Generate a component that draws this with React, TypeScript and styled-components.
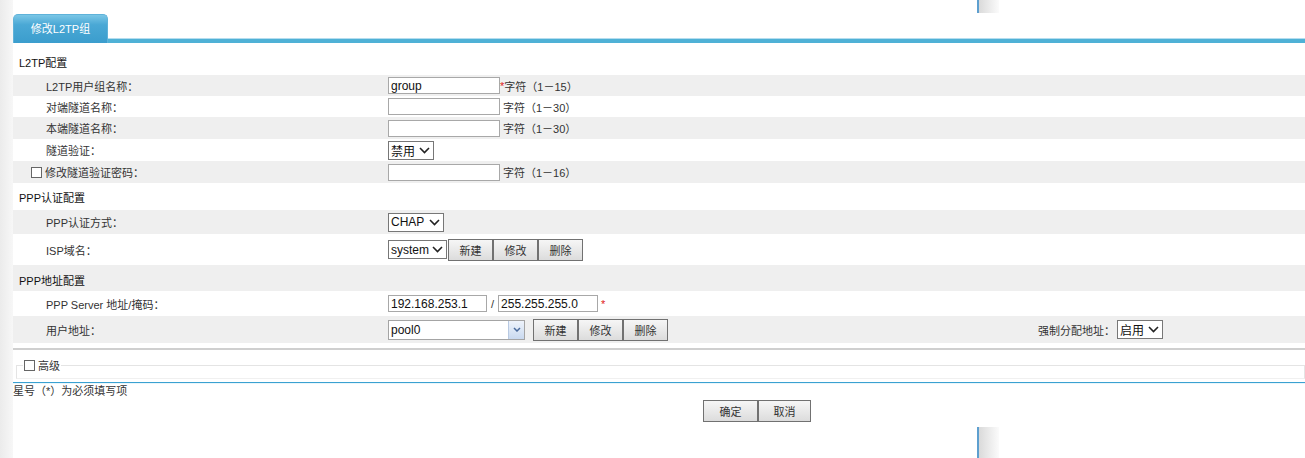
import React from 'react';
import styled, { createGlobalStyle } from 'styled-components';

const GlobalStyle = createGlobalStyle`
  html, body {
    margin: 0;
    padding: 0;
    background: #fff;
  }
  body {
    font-family: "Liberation Sans", Arial, "Noto Sans CJK SC", sans-serif;
    font-size: 11px;
    color: #333;
  }
`;

const Page = styled.div`
  position: relative;
  display: flex;
  height: 458px;
  overflow: hidden;
`;

const Gutter = styled.div`
  width: 13px;
  flex: none;
  background: linear-gradient(to right, #ebebeb, #f7f7f7);
`;

const Main = styled.div`
  flex: 1;
  min-width: 0;
  background: #fff;
`;

const TabBar = styled.div`
  display: flex;
  align-items: flex-end;
  height: 43px;
`;

const Tab = styled.div`
  width: 95px;
  height: 29px;
  box-sizing: border-box;
  border: 1px solid #5fb2d9;
  border-bottom: none;
  border-radius: 5px 5px 0 0;
  background: linear-gradient(#7ac6e6, #4aa8d5 35%, #3b9dcd);
  color: #fff;
  display: flex;
  align-items: center;
  justify-content: center;
  padding-bottom: 2px;
`;

const TabLine = styled.div`
  flex: 1;
  height: 5px;
  box-sizing: border-box;
  border-top: 1px solid #b4ddef;
  background: #4fb1d6;
`;

const Form = styled.div`
  padding-top: 6px;
`;

const Row = styled.div<{ $h: number; $alt?: boolean; $pt?: number }>`
  display: flex;
  align-items: center;
  height: ${(p) => p.$h}px;
  box-sizing: border-box;
  padding-top: ${(p) => p.$pt ?? 0}px;
  background: ${(p) => (p.$alt ? '#efefef' : '#fff')};
`;

const SectionTitle = styled.div`
  padding-left: 6px;
  color: #111;
`;

const Label = styled.div<{ $indent?: number }>`
  width: 375px;
  flex: none;
  box-sizing: border-box;
  padding-left: ${(p) => p.$indent ?? 33}px;
  display: flex;
  align-items: center;
  gap: 3px;
  color: #333;
`;

const Field = styled.div`
  flex: 1;
  display: flex;
  align-items: center;
`;

const TextInput = styled.input<{ $w?: number }>`
  width: ${(p) => p.$w ?? 112}px;
  height: 17px;
  box-sizing: border-box;
  border: 1px solid #a8a8a8;
  padding: 0 2px;
  margin: 0;
  font-family: "Liberation Sans", Arial, sans-serif;
  font-size: 12px;
  color: #111;
  outline: none;
`;

const Hint = styled.span`
  margin-left: 3px;
  color: #333;
`;

const Star = styled.span`
  color: #e02020;
`;

const Slash = styled.span`
  margin: 0 4px;
  color: #333;
`;

const SelectBox = styled.div<{ $w: number }>`
  width: ${(p) => p.$w}px;
  height: 19px;
  box-sizing: border-box;
  border: 1px solid #777;
  background: #fff;
  display: flex;
  align-items: center;
  justify-content: space-between;
  padding: 0 3px 0 2px;
  font-size: 12px;
  color: #111;
`;

const ButtonGroup = styled.div<{ $ml?: number }>`
  display: flex;
  margin-left: ${(p) => p.$ml ?? 1}px;
`;

const Btn = styled.div<{ $w?: number }>`
  width: ${(p) => p.$w ?? 45}px;
  height: 22px;
  box-sizing: border-box;
  border: 1px solid #717171;
  background: linear-gradient(#f6f6f6, #dcdcdc);
  display: flex;
  align-items: center;
  justify-content: center;
  color: #333;
  font-size: 11px;
`;

const Combo = styled.div`
  width: 137px;
  height: 20px;
  box-sizing: border-box;
  border: 1px solid #a4a4a4;
  display: flex;
  background: #fff;
`;

const ComboText = styled.div`
  flex: 1;
  display: flex;
  align-items: center;
  padding-left: 2px;
  font-size: 12px;
  color: #111;
`;

const ComboBtn = styled.div`
  width: 15px;
  border-left: 1px solid #b8c9e2;
  background: linear-gradient(#eef3fb, #c9d9ef);
  display: flex;
  align-items: center;
  justify-content: center;
`;

const RightGroup = styled.div`
  margin-left: auto;
  margin-right: 142px;
  display: flex;
  align-items: center;
  gap: 2px;
`;

const Check = styled.span`
  width: 11px;
  height: 11px;
  box-sizing: border-box;
  border: 1px solid #666;
  background: #fff;
  display: inline-block;
  flex: none;
`;

const Divider = styled.div`
  height: 2px;
  margin-top: 5px;
  background: #cfcfcf;
`;

const Advanced = styled.fieldset`
  margin: 7px 0 0 3px;
  padding: 0;
  height: 20px;
  border: 1px solid #e4e4e4;
  border-bottom-color: #f0f0f0;
`;

const Legend = styled.legend`
  margin-left: 6px;
  padding: 0 1px;
  display: flex;
  align-items: center;
  gap: 3px;
  color: #333;
`;

const BlueRule = styled.div`
  height: 2px;
  margin-top: 3px;
  border-top: 1px solid #3aa1d1;
  background: #e8f6fc;
  box-sizing: border-box;
`;

const Note = styled.div`
  height: 14px;
  line-height: 14px;
  color: #333;
`;

const Actions = styled.div`
  display: flex;
  padding-left: 690px;
  margin-top: 2px;
`;

const ScrollEdge = styled.div<{ $top: number; $h: number }>`
  position: absolute;
  left: 977px;
  top: ${(p) => p.$top}px;
  width: 22px;
  height: ${(p) => p.$h}px;
  box-sizing: border-box;
  border-left: 2px solid #5d9fcf;
  background: linear-gradient(to right, #dadada, #fbfbfb);
`;

const Chevron = () => (
  <svg width="11" height="7" viewBox="0 0 11 7">
    <polyline points="1,1 5.5,5.5 10,1" fill="none" stroke="#222" strokeWidth="1.6" />
  </svg>
);

const SmallChevron = () => (
  <svg width="8" height="5" viewBox="0 0 8 5">
    <polyline points="1,1 4,4 7,1" fill="none" stroke="#4a6a9c" strokeWidth="1.5" />
  </svg>
);

const Select = ({ w, value }: { w: number; value: string }) => (
  <SelectBox $w={w}>
    <span>{value}</span>
    <Chevron />
  </SelectBox>
);

const EditButtons = ({ ml }: { ml?: number }) => (
  <ButtonGroup $ml={ml}>
    <Btn>新建</Btn>
    <Btn>修改</Btn>
    <Btn>删除</Btn>
  </ButtonGroup>
);

export default function App() {
  return (
    <>
      <GlobalStyle />
      <Page>
        <Gutter />
        <Main>
          <TabBar>
            <Tab>修改L2TP组</Tab>
            <TabLine />
          </TabBar>
          <Form>
            <Row $h={26}>
              <SectionTitle>L2TP配置</SectionTitle>
            </Row>
            <Row $h={21} $alt>
              <Label>L2TP用户组名称：</Label>
              <Field>
                <TextInput defaultValue="group" />
                <Star>*</Star>
                <span>字符（1－15）</span>
              </Field>
            </Row>
            <Row $h={21}>
              <Label>对端隧道名称：</Label>
              <Field>
                <TextInput />
                <Hint>字符（1－30）</Hint>
              </Field>
            </Row>
            <Row $h={22} $alt>
              <Label>本端隧道名称：</Label>
              <Field>
                <TextInput />
                <Hint>字符（1－30）</Hint>
              </Field>
            </Row>
            <Row $h={22}>
              <Label>隧道验证：</Label>
              <Field>
                <Select w={46} value="禁用" />
              </Field>
            </Row>
            <Row $h={22} $alt>
              <Label $indent={18}>
                <Check />
                修改隧道验证密码：
              </Label>
              <Field>
                <TextInput />
                <Hint>字符（1－16）</Hint>
              </Field>
            </Row>
            <Row $h={27}>
              <SectionTitle>PPP认证配置</SectionTitle>
            </Row>
            <Row $h={24} $alt>
              <Label>PPP认证方式：</Label>
              <Field>
                <Select w={56} value="CHAP" />
              </Field>
            </Row>
            <Row $h={31}>
              <Label>ISP域名：</Label>
              <Field>
                <Select w={59} value="system" />
                <EditButtons />
              </Field>
            </Row>
            <Row $h={26} $pt={3} $alt>
              <SectionTitle>PPP地址配置</SectionTitle>
            </Row>
            <Row $h={25}>
              <Label>PPP Server 地址/掩码：</Label>
              <Field>
                <TextInput $w={99} defaultValue="192.168.253.1" />
                <Slash>/</Slash>
                <TextInput $w={100} defaultValue="255.255.255.0" />
                <Star>&nbsp;*</Star>
              </Field>
            </Row>
            <Row $h={27} $alt>
              <Label>用户地址：</Label>
              <Field>
                <Combo>
                  <ComboText>pool0</ComboText>
                  <ComboBtn>
                    <SmallChevron />
                  </ComboBtn>
                </Combo>
                <EditButtons ml={8} />
                <RightGroup>
                  <span>强制分配地址：</span>
                  <Select w={46} value="启用" />
                </RightGroup>
              </Field>
            </Row>
          </Form>
          <Divider />
          <Advanced>
            <Legend>
              <Check />
              高级
            </Legend>
          </Advanced>
          <BlueRule />
          <Note>星号（*）为必须填写项</Note>
          <Actions>
            <Btn $w={55}>确定</Btn>
            <Btn $w={53}>取消</Btn>
          </Actions>
        </Main>
        <ScrollEdge $top={0} $h={13} />
        <ScrollEdge $top={427} $h={31} />
      </Page>
    </>
  );
}
